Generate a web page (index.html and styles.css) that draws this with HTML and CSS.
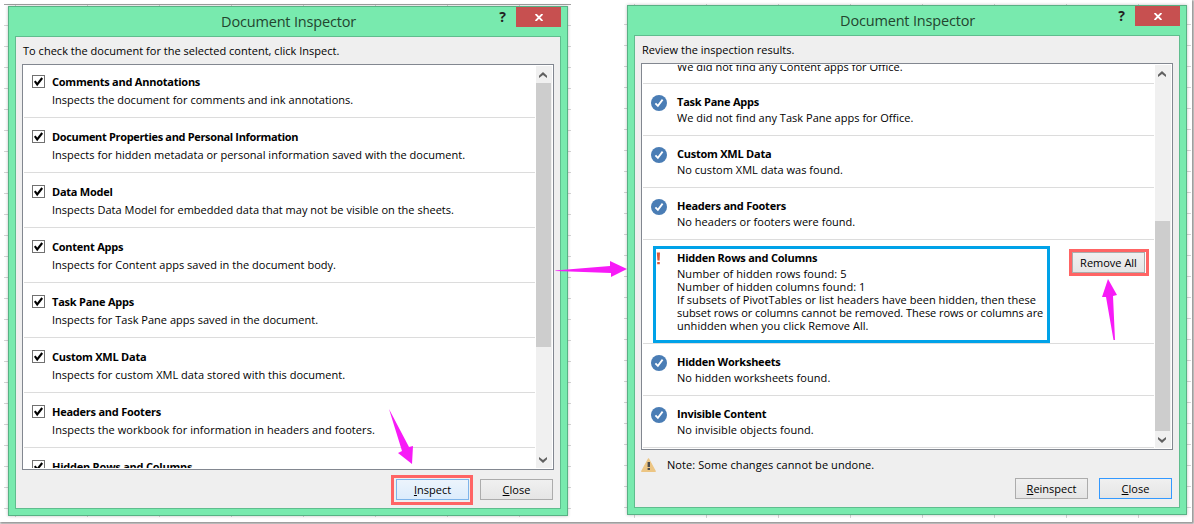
FILE: index.html
```html
<!DOCTYPE html>
<html lang="en">
<head>
    <meta charset="UTF-8">
    <meta name="viewport" content="width=device-width, initial-scale=1.0">
    <title>Document Inspector</title>
    <link rel="stylesheet" href="styles.css">
</head>
<body>
    <svg class="defs" width="0" height="0">
        <symbol id="tick" viewBox="0 0 13 13">
            <path d="M2.8 6.2 L5.2 9.4 L10.2 3" fill="none" stroke="#000" stroke-width="2.1"/>
        </symbol>
        <symbol id="done" viewBox="0 0 16 16">
            <circle cx="8" cy="8" r="8" fill="#4a7db5"/>
            <path d="M4.4 8.3 L6.9 10.9 L11.6 4.6" fill="none" stroke="#fff" stroke-width="1.8"/>
        </symbol>
        <symbol id="up" viewBox="0 0 8 6">
            <path d="M0 3.8 L4 0 L8 3.8 V6 L4 2.9 L0 6 Z" fill="#606060"/>
        </symbol>
        <symbol id="down" viewBox="0 0 8 6">
            <path d="M0 2.2 L4 6 L8 2.2 V0 L4 3.1 L0 0 Z" fill="#606060"/>
        </symbol>
        <symbol id="cross" viewBox="0 0 8 7">
            <path d="M0.6 0 L7.4 7 M7.4 0 L0.6 7" stroke="#fff" stroke-width="1.8"/>
        </symbol>
    </svg>

    <div class="board">
        <div class="sheet sheetLeft">
            <div class="dialog">
                <div class="titlebar">
                    <h1>Document Inspector</h1>
                    <span class="help">?</span>
                    <span class="closeBox"><svg width="8" height="7"><use href="#cross"/></svg></span>
                </div>
                <div class="panel">
                    <p class="intro">To check the document for the selected content, click Inspect.</p>
                    <div class="list checkList">
                        <div class="rows">
                            <div class="row">
                                <span class="check"><svg width="13" height="13"><use href="#tick"/></svg></span>
                                <div><h2>Comments and Annotations</h2><p>Inspects the document for comments and ink annotations.</p></div>
                            </div>
                            <div class="row">
                                <span class="check"><svg width="13" height="13"><use href="#tick"/></svg></span>
                                <div><h2 class="long">Document Properties and Personal Information</h2><p>Inspects for hidden metadata or personal information saved with the document.</p></div>
                            </div>
                            <div class="row">
                                <span class="check"><svg width="13" height="13"><use href="#tick"/></svg></span>
                                <div><h2>Data Model</h2><p>Inspects Data Model for embedded data that may not be visible on the sheets.</p></div>
                            </div>
                            <div class="row">
                                <span class="check"><svg width="13" height="13"><use href="#tick"/></svg></span>
                                <div><h2>Content Apps</h2><p>Inspects for Content apps saved in the document body.</p></div>
                            </div>
                            <div class="row">
                                <span class="check"><svg width="13" height="13"><use href="#tick"/></svg></span>
                                <div><h2>Task Pane Apps</h2><p>Inspects for Task Pane apps saved in the document.</p></div>
                            </div>
                            <div class="row">
                                <span class="check"><svg width="13" height="13"><use href="#tick"/></svg></span>
                                <div><h2>Custom XML Data</h2><p>Inspects for custom XML data stored with this document.</p></div>
                            </div>
                            <div class="row">
                                <span class="check"><svg width="13" height="13"><use href="#tick"/></svg></span>
                                <div><h2>Headers and Footers</h2><p class="wide">Inspects the workbook for information in headers and footers.</p></div>
                            </div>
                            <div class="row">
                                <span class="check"><svg width="13" height="13"><use href="#tick"/></svg></span>
                                <div><h2>Hidden Rows and Columns</h2></div>
                            </div>
                        </div>
                        <div class="scroll">
                            <span class="arrow"><svg width="8" height="6"><use href="#up"/></svg></span>
                            <span class="thumb"></span>
                            <span class="arrow arrowDown"><svg width="8" height="6"><use href="#down"/></svg></span>
                        </div>
                    </div>
                    <div class="buttons">
                        <span class="mark markInspect"><button class="hot"><u>I</u>nspect</button></span>
                        <button><u>C</u>lose</button>
                    </div>
                </div>
            </div>
        </div>

        <div class="sheet sheetRight">
            <div class="dialog">
                <div class="titlebar">
                    <h1>Document Inspector</h1>
                    <span class="help">?</span>
                    <span class="closeBox"><svg width="8" height="7"><use href="#cross"/></svg></span>
                </div>
                <div class="panel">
                    <p class="intro">Review the inspection results.</p>
                    <div class="list resultList">
                        <div class="rows">
                            <div class="row rowCut">
                                <p>We did not find any Content apps for Office.</p>
                            </div>
                            <div class="row">
                                <svg class="icon" width="16" height="16"><use href="#done"/></svg>
                                <div><h2>Task Pane Apps</h2><p>We did not find any Task Pane apps for Office.</p></div>
                            </div>
                            <div class="row">
                                <svg class="icon" width="16" height="16"><use href="#done"/></svg>
                                <div><h2>Custom XML Data</h2><p>No custom XML data was found.</p></div>
                            </div>
                            <div class="row">
                                <svg class="icon" width="16" height="16"><use href="#done"/></svg>
                                <div><h2>Headers and Footers</h2><p>No headers or footers were found.</p></div>
                            </div>
                            <div class="row rowFound">
                                <svg class="icon" width="16" height="16" viewBox="0 0 16 16">
                                    <path d="M5.8 1.5 H9 L8.6 9.5 H6.4 Z M6.2 11 H8.8 V13.2 H6.2 Z" fill="#d9573a"/>
                                </svg>
                                <div>
                                    <h2>Hidden Rows and Columns</h2>
                                    <p><span class="wide">Number of hidden rows found: 5</span><br><span class="wide">Number of hidden columns found: 1</span><br><span class="wide">If subsets of PivotTables or list headers have been hidden, then these</span><br>subset rows or columns cannot be removed. These rows or columns are<br><span class="wide">unhidden when you click Remove All.</span></p>
                                </div>
                                <span class="mark markRemove"><button>Remove All</button></span>
                                <span class="callout"></span>
                            </div>
                            <div class="row">
                                <svg class="icon" width="16" height="16"><use href="#done"/></svg>
                                <div><h2>Hidden Worksheets</h2><p class="wide">No hidden worksheets found.</p></div>
                            </div>
                            <div class="row">
                                <svg class="icon" width="16" height="16"><use href="#done"/></svg>
                                <div><h2>Invisible Content</h2><p class="wide">No invisible objects found.</p></div>
                            </div>
                        </div>
                        <div class="scroll">
                            <span class="arrow"><svg width="8" height="6"><use href="#up"/></svg></span>
                            <span class="thumb"></span>
                            <span class="arrow arrowDown"><svg width="8" height="6"><use href="#down"/></svg></span>
                        </div>
                    </div>
                    <div class="note">
                        <svg width="15" height="14" viewBox="0 0 15 14">
                            <path d="M7.5 0.8 L14.3 13.3 H0.7 Z" fill="#ecc583" stroke="#ecc583" stroke-width="1.2" stroke-linejoin="round"/>
                            <path d="M6.6 4 H9 V9 H6.6 Z M6.6 10 H9 V12 H6.6 Z" fill="#4c4c4c"/>
                        </svg>
                        <p>Note: Some changes cannot be undone.</p>
                    </div>
                    <div class="buttons">
                        <button><u>R</u>einspect</button>
                        <button class="focus"><u>C</u>lose</button>
                    </div>
                </div>
            </div>
        </div>

        <!-- pink arrows over both dialogs -->
        <svg class="pointers" width="1194" height="524" viewBox="0 0 1194 524">
            <g fill="#f71bf7">
                <path d="M389 409 L409 447 L413 446 L412 464 L398 453 L402 451 Z"/>
                <path d="M555 270.5 L610 266 L610 261 L627 269 L611 277 L611 273 L556 271 Z"/>
                <path d="M1108 279 L1117 295 L1113 296 L1115 340 L1113.5 340 L1106 297 L1102 297 Z"/>
            </g>
        </svg>
    </div>
</body>
</html>
```
FILE: styles.css
```css
*{
    margin: 0px;
    padding: 0px;
    box-sizing: border-box;
}
body{
    width: 1194px;
    height: 524px;
    overflow: hidden;
    background: #fff;
    color: #000;
    font-family: "Open Sans", "Noto Sans", sans-serif;
    font-size: 11px;
}
.defs{
    position: absolute;
}
.board{
    position: relative;
    display: flex;
    width: 1192px;
    height: 522px;
    padding-left: 4px;
    box-shadow: 1px 1px 2px 1px #999;
}

/* spreadsheet grid showing round the dialogs */
.sheet{
    width: 567px;
}
.sheetLeft{
    height: 513px;
    margin: 4px 53px 0px 0px;
    padding: 1px 0px 0px 4px;
    border-top: 1px solid #a0a0a0;
    background:
        repeating-linear-gradient(to right, transparent 0px, transparent 11px, #d4d4d4 11px, #d4d4d4 12px, transparent 12px, transparent 72px),
        repeating-linear-gradient(to bottom, transparent 0px, transparent 20px, #d4d4d4 20px, #d4d4d4 21px);
}
.sheetRight{
    height: 514px;
    margin-top: 4px;
    padding: 1px 0px 0px 3px;
    background:
        repeating-linear-gradient(to right, transparent 0px, transparent 10px, #d4d4d4 10px, #d4d4d4 11px, transparent 11px, transparent 72px),
        repeating-linear-gradient(to bottom, transparent 0px, transparent 20px, #d4d4d4 20px, #d4d4d4 21px);
}
.dialog{
    width: 560px;
    height: 510px;
    padding: 0px 6px 6px;
    background: #78eaae;
    border: 1px solid #58b184;
    box-shadow: 0px 0px 3px rgba(0, 0, 0, 0.25);
}
.titlebar{
    position: relative;
    height: 29px;
    text-align: center;
}
h1{
    padding-left: 1px;
    font-size: 14.5px;
    font-weight: 400;
    line-height: 30px;
    letter-spacing: -0.18px;
    color: #23452f;
}
.help{
    position: absolute;
    right: 55px;
    top: 0px;
    font-size: 14px;
    font-weight: 700;
    line-height: 20px;
    color: #222;
}
.closeBox{
    position: absolute;
    right: 0px;
    top: 0px;
    display: flex;
    align-items: center;
    justify-content: center;
    width: 45px;
    height: 20px;
    background: #c75050;
}
.panel{
    height: 473px;
    padding: 0px 6px;
    background: #efefef;
    border: 1px solid #5fbd8e;
}
.intro{
    height: 27px;
    padding-left: 1px;
    line-height: 28px;
}

.list{
    display: flex;
    justify-content: space-between;
    width: 532px;
    padding: 1px;
    background: #fff;
    border: 1px solid #828790;
}
.checkList{
    height: 406px;
}
.resultList{
    height: 387px;
}
.rows{
    width: 511px;
    overflow: hidden;
}
.row{
    position: relative;
    display: flex;
    border-bottom: 1px solid #dcdcdc;
}
h2{
    font-size: 11px;
    font-weight: 700;
    letter-spacing: -0.24px;
    white-space: nowrap;
}
.long{
    letter-spacing: -0.34px;
}
p{
    letter-spacing: 0.02px;
    white-space: nowrap;
}
.wide{
    letter-spacing: 0.06px;
}
.checkList .row{
    height: 55px;
    padding: 10px 0px 0px 8px;
    gap: 7px;
    line-height: 18px;
}
.checkList .row:first-child{
    margin-top: -3px;
}
.check{
    width: 13px;
    height: 13px;
    margin-top: 2px;
    border: 1px solid #707070;
}
.check svg{
    display: block;
    margin: -1px;
}
.resultList .row{
    height: 52px;
    padding: 10px 0px 0px 8px;
    gap: 10px;
    line-height: 16px;
}
.resultList .row p{
    margin-top: 1px;
    line-height: 13px;
}
.resultList .rowCut{
    height: 19px;
    padding: 0px 0px 0px 34px;
}
.resultList .rowCut p{
    margin-top: -5px;
}
.icon{
    width: 16px;
    height: 16px;
    margin-top: 1px;
}
.resultList .rowFound{
    height: 104px;
}
.rowFound p{
    letter-spacing: -0.04px;
}
.callout{
    position: absolute;
    left: 10px;
    top: 6px;
    width: 397px;
    height: 97px;
    border: 3px solid #00a2e8;
}

.scroll{
    display: flex;
    flex-direction: column;
    width: 16px;
    background: #f0f0f0;
}
.arrow{
    display: flex;
    align-items: center;
    justify-content: center;
    width: 14px;
    height: 17px;
}
.arrowDown{
    margin-top: auto;
}
.thumb{
    width: 15px;
    background: #cdcdcd;
}
.checkList .thumb{
    height: 264px;
}
.resultList .thumb{
    height: 210px;
    margin-top: 139px;
}

.note{
    display: flex;
    height: 28px;
    padding-top: 8px;
    gap: 11px;
    line-height: 14px;
}
.note p{
    letter-spacing: 0.08px;
}
.buttons{
    display: flex;
    justify-content: flex-end;
    gap: 11px;
    padding-right: 1px;
}
.sheetLeft .buttons{
    gap: 7px;
    padding-top: 5px;
}
.sheetLeft .buttons > button{
    margin-top: 4px;
}
button{
    width: 73px;
    height: 21px;
    font-family: inherit;
    font-size: 11px;
    line-height: 18px;
    color: #000;
    background: linear-gradient(#f0f0f0, #e5e5e5);
    border: 1px solid #acacac;
}
.hot{
    background: linear-gradient(#ecf4fc, #dcecfc);
    border-color: #7eb4ea;
}
.focus{
    border-color: #3399ff;
}
.mark{
    border: 3px solid #ff6464;
}
.mark button{
    display: block;
}
.markInspect{
    width: 82px;
    height: 30px;
    padding: 1px 2px;
}
.markRemove{
    position: absolute;
    left: 426px;
    top: 9px;
    width: 80px;
    height: 27px;
    background: #fff;
}

.pointers{
    position: absolute;
    left: 0px;
    top: 0px;
}
```
